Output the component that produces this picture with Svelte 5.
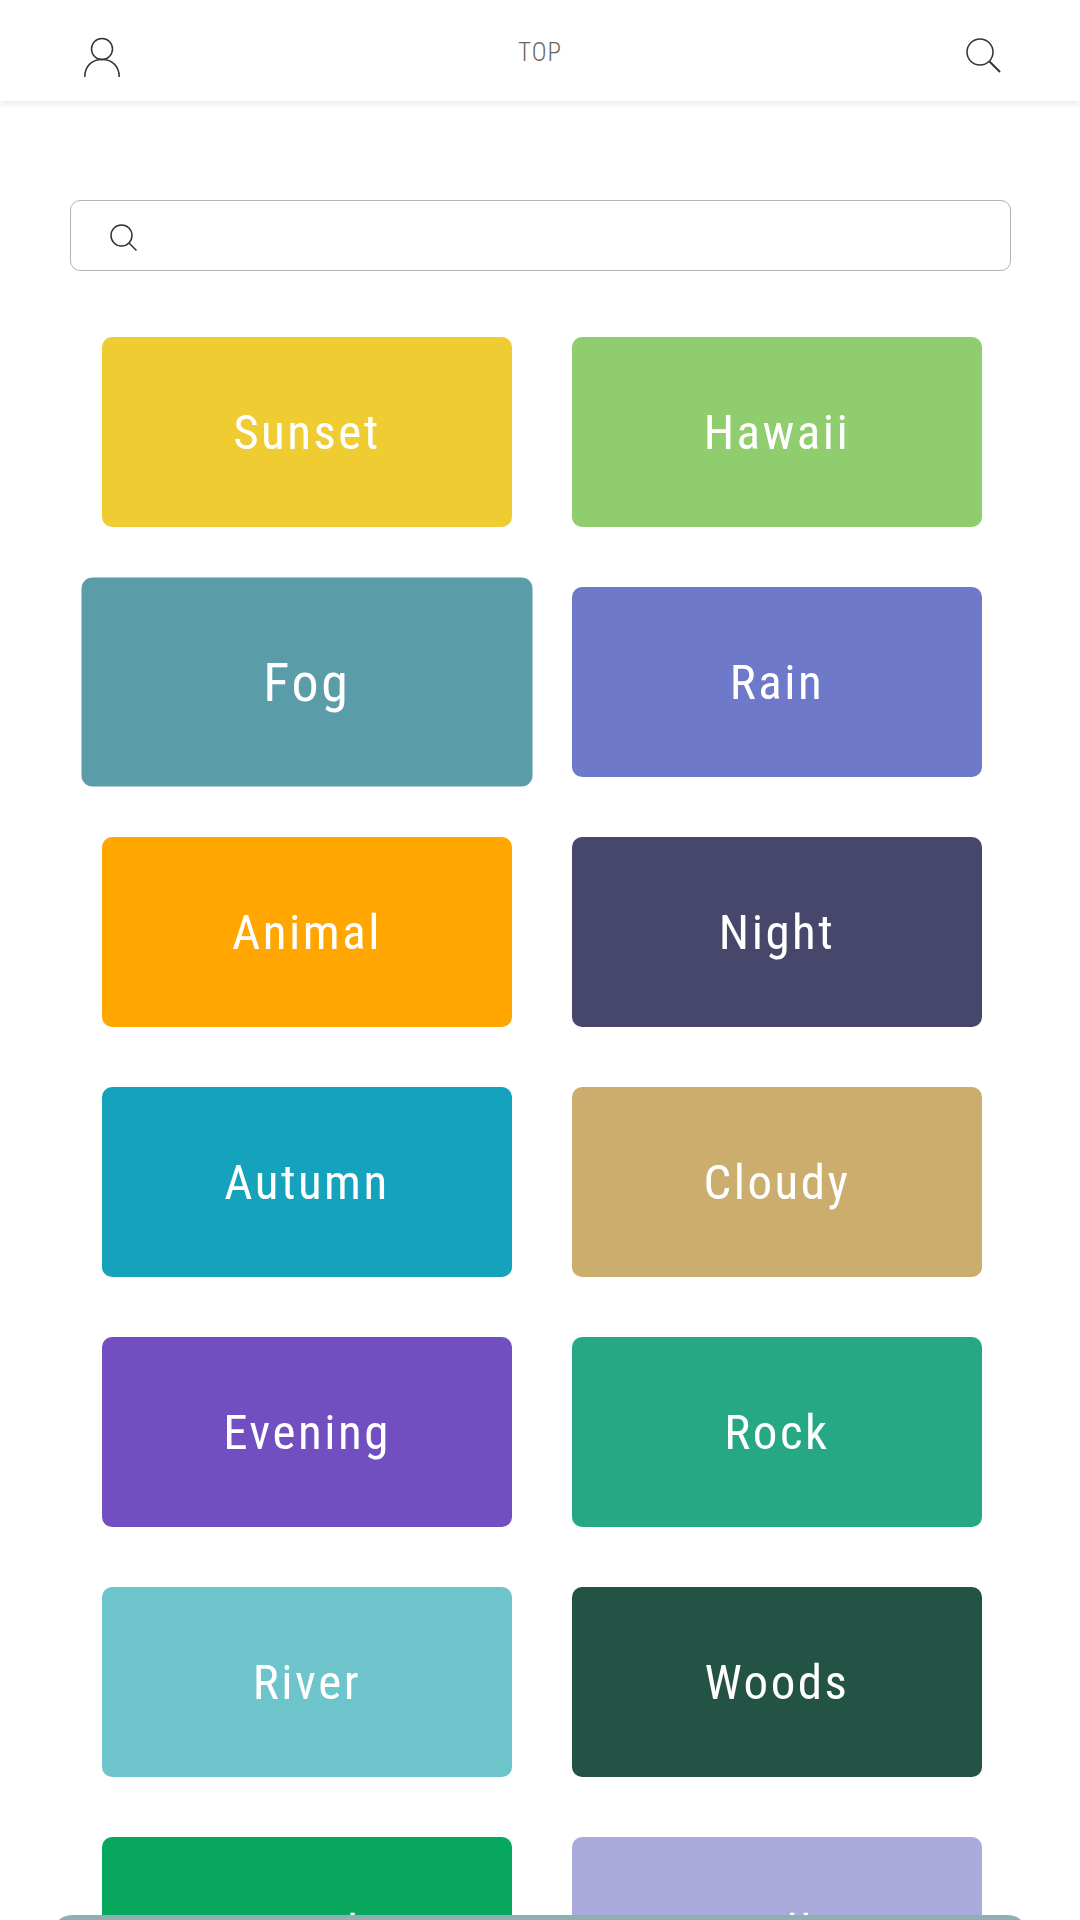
<script>
	const cards = [
		{ name: 'Sunset', color: '#efcd32' },
		{ name: 'Hawaii', color: '#90cd6f' },
		{ name: 'Fog', color: '#5b9ca9', active: true },
		{ name: 'Rain', color: '#6e79c9' },
		{ name: 'Animal', color: '#ffa601' },
		{ name: 'Night', color: '#47476b' },
		{ name: 'Autumn', color: '#14a2bc' },
		{ name: 'Cloudy', color: '#cbae6e' },
		{ name: 'Evening', color: '#714fc1' },
		{ name: 'Rock', color: '#25a883' },
		{ name: 'River', color: '#6dc4cb' },
		{ name: 'Woods', color: '#235344' },
		{ name: 'Sand', color: '#07a85d' },
		{ name: 'Hill', color: '#abaadc' }
	];
</script>

<div class="page">
	<header>
		<button class="icon" aria-label="Account">
			<svg width="37" height="41" viewBox="0 0 37 41">
				<circle cx="18" cy="12" r="10.5" />
				<path d="M0.750 40 C0.750 29 8 22.500 18 22.500 C28 22.500 35.250 29 35.250 40" />
			</svg>
		</button>
		<span class="title">TOP</span>
		<button class="icon" aria-label="Search">
			<svg width="37" height="37" viewBox="0 0 37 37">
				<circle cx="15" cy="15" r="13" />
				<path d="M24.500 24.500 L35 35" stroke-width="2" />
			</svg>
		</button>
	</header>

	<main>
		<label class="search">
			<svg width="28" height="28" viewBox="0 0 28 28">
				<circle cx="11.500" cy="11.500" r="10.500" />
				<path d="M19 19 L26.500 26.500" />
			</svg>
			<input type="text" />
		</label>

		<section class="grid">
			{#each cards as card}
				<div class="card" class:active={card.active} style="background: {card.color}">{card.name}</div>
			{/each}
		</section>
	</main>

	<div class="sheet"></div>
</div>

<style>
	:global(body) {
		background: #fff;
	}

	.page {
		position: relative;
		height: 1920px;
		overflow: hidden;
		font-family: Roboto, sans-serif;
	}

	header {
		display: flex;
		justify-content: space-between;
		align-items: flex-start;
		height: 101px;
		padding: 37px 78px 0 84px;
		box-sizing: border-box;
		background: #fff;
		box-shadow: 0 2px 7px rgba(0, 0, 0, 0.1);
	}

	.icon {
		padding: 0;
		border: 0;
		background: none;
		line-height: 0;
	}

	svg {
		fill: none;
		stroke: #333;
		stroke-width: 1.5;
	}

	.title {
		margin: 2px 6px 0 0;
		font-size: 25px;
		font-weight: 300;
		font-stretch: 75%;
		letter-spacing: 1px;
		line-height: 28px;
		color: #666;
	}

	main {
		padding: 99px 69px 0 70px;
	}

	.search {
		display: flex;
		align-items: center;
		gap: 12px;
		height: 71px;
		padding: 4px 0 0 39px;
		box-sizing: border-box;
		border: 1px solid #b4b4b4;
		border-radius: 10px;
	}

	input {
		flex: 1;
		border: 0;
		outline: none;
		background: none;
	}

	.grid {
		display: grid;
		grid-template-columns: 410px 410px;
		grid-auto-rows: 190px;
		gap: 60px;
		margin-top: 66px;
		padding-left: 32px;
	}

	.card {
		display: flex;
		align-items: center;
		justify-content: center;
		padding-top: 1px;
		box-sizing: border-box;
		border-radius: 10px;
		font-size: 49px;
		font-stretch: 75%;
		letter-spacing: 2.5px;
		color: #fff;
	}

	.active {
		transform: scale(1.1);
	}

	.sheet {
		position: absolute;
		left: 52px;
		right: 52px;
		bottom: -40px;
		height: 45px;
		border-radius: 20px 20px 0 0;
		background: #8fb0b3;
	}
</style>
